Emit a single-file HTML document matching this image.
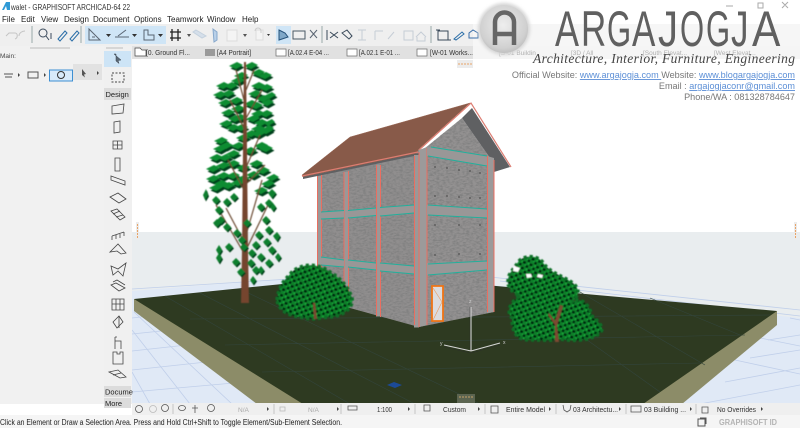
<!DOCTYPE html>
<html><head><meta charset="utf-8"><title>ARCHICAD</title>
<style>
html,body{margin:0;padding:0;background:#fff}
svg{display:block}
text{font-family:"Liberation Sans",sans-serif}
</style></head><body>
<svg width="800" height="428" viewBox="0 0 800 428" xmlns="http://www.w3.org/2000/svg">
<defs>
<pattern id="leaf" width="7" height="6" patternUnits="userSpaceOnUse" patternTransform="rotate(20)">
<rect width="7" height="6" fill="#0c8029"/>
<path d="M0 0h3v2.500H0zM4 3h2.500v2.500H4z" fill="#04240f"/>
<path d="M2.500 2.500h1.500v1.500H2.500zM5 0h2v2H5z" fill="#14a538"/>
</pattern>
<path id="up" d="M229 66l8-4 6 3-7 4zM244 66l8-4 6 3-7 4zM251 73l8-4 6 3-7 4zM234 76l8-4 6 3-7 4zM258 76l8-4 6 3-7 4zM216 86l8-4 6 3-7 4zM224 86l8-4 6 3-7 4zM231 81l8-4 6 3-7 4zM251 86l8-4 6 3-7 4zM259 88l8-4 6 3-7 4zM264 96l8-4 4 3-7 4zM213 95l8-4 6 3-7 4zM221 94l8-4 6 3-7 4zM248 94l8-4 6 3-7 4zM256 99l8-4 6 3-7 4zM261 103l8-4 5 3-7 4zM218 103l8-4 6 3-7 4zM229 101l8-4 6 3-7 4zM244 104l8-4 6 3-7 4zM249 106l8-4 6 3-7 4zM221 113l8-4 6 3-7 4zM231 109l8-4 6 3-7 4zM233 118l8-4 6 3-7 4zM251 114l8-4 6 3-7 4zM259 114l8-4 6 3-7 4zM264 123l8-4 3 3-7 4zM228 119l8-4 6 3-7 4zM246 119l8-4 6 3-7 4zM254 123l8-4 6 3-7 4zM219 124l8-4 6 3-7 4zM226 128l8-4 6 3-7 4zM251 129l8-4 6 3-7 4zM259 131l8-4 6 3-7 4zM234 128l8-4 6 3-7 4zM263 129l6-4 5 3-6 4zM251 134l8-4 6 3-7 4zM244 134l8-4 6 3-7 4zM236 138l8-4 6 3-7 4zM231 146l8-4 6 3-7 4zM219 146l8-4 6 3-7 4zM213 149l8-4 6 3-7 4zM214 141l8-4 6 3-7 4zM254 146l8-4 6 3-7 4zM259 149l8-4 6 3-7 4zM243 151l8-4 6 3-7 4zM226 154l8-4 6 3-7 4zM218 158l8-4 6 3-7 4zM209 158l8-4 6 3-7 4zM249 164l8-4 6 3-7 4zM256 171l8-4 6 3-7 4zM206 169l8-4 6 3-7 4zM216 166l8-4 6 3-7 4zM226 164l8-4 6 3-7 4zM236 168l8-4 6 3-7 4zM266 178l8-4 5 3-7 4zM206 179l8-4 6 3-7 4zM216 176l8-4 6 3-7 4zM226 176l8-4 6 3-7 4zM236 179l8-4 6 3-7 4zM261 184l8-4 6 3-7 4zM209 188l8-4 6 3-7 4zM221 186l8-4 6 3-7 4zM231 183l8-4 6 3-7 4zM254 191l8-4 6 3-7 4zM246 175l8-4 6 3-7 4zM214 184l8-4 6 3-7 4z"/>
<path id="lo" d="M268 193l4-4 4 4-4 5zM203 195l3-6 2 6-3 5zM212 200l4-4 4 4-4 4zM223 202l4-4 4 4-4 4zM215 210l4-4 4 4-4 4zM265 203l4-4 4 4-4 4zM270 207l3-4 3 4-3 4zM257 207l4-4 4 4-4 4zM262 220l4-4 4 4-4 4zM217 220l4-4 4 4-4 4zM223 227l4-4 4 4-4 4zM213 223l4-4 4 4-4 4zM233 233l4-4 4 4-4 4zM243 223l4-4 4 4-4 4zM265 230l4-4 4 4-4 4zM273 236l4-4 3 4-3 5zM255 235l4-4 4 4-4 4zM225 247l4-4 4 4-4 4zM216 250l3-5 3 5-3 5zM216 258l3-5 3 5-3 5zM263 242l4-4 4 4-4 4zM268 250l4-4 4 4-4 4zM275 257l3-4 3 4-3 4zM240 247l4-4 4 4-4 4zM248 253l4-4 4 4-4 4zM232 262l4-4 4 4-4 4zM257 257l4-4 4 4-4 4zM265 263l4-4 4 4-4 4zM237 272l4-4 4 4-4 4zM252 270l4-4 4 4-4 4zM247 263l4-4 4 4-4 4zM250 280l3-4 3 4-3 4zM230 197l4-4 4 4-4 4zM238 240l4-4 4 4-4 4zM252 245l4-4 4 4-4 4zM258 270l3-4 3 4-3 4z"/>
<filter id="b" x="-5%" y="-5%" width="110%" height="110%"><feGaussianBlur stdDeviation=".35"/></filter>
<filter id="b3" x="-5%" y="-5%" width="110%" height="110%"><feGaussianBlur stdDeviation=".45"/></filter>
<filter id="b2" x="-20%" y="-20%" width="140%" height="140%"><feGaussianBlur stdDeviation="1.6"/></filter>
<filter id="stone" x="0" y="0" width="100%" height="100%">
<feTurbulence type="fractalNoise" baseFrequency=".3 .6" numOctaves="2" seed="4" result="n"/>
<feColorMatrix in="n" type="matrix" values="0 0 0 0 .22  0 0 0 0 .22  0 0 0 0 .22  3 0 0 0 -1.200" result="d"/>
<feComposite in="d" in2="SourceAlpha" operator="in" result="c"/>
<feMerge><feMergeNode in="SourceGraphic"/><feMergeNode in="c"/></feMerge>
</filter>
<radialGradient id="disc" cx=".48" cy=".42" r=".6"><stop offset="0" stop-color="#eeeeee"/><stop offset=".8" stop-color="#d0d0d0"/><stop offset="1" stop-color="#bdbdbd"/></radialGradient>
</defs>

<rect width="800" height="428" fill="#fff"/>
<rect x="132" y="232" width="668" height="172" fill="#e9edef"/>
<path d="M132 291L372 272 800 318V404H132Z" fill="#e0e9f6"/>
<g stroke="#c0cfea" stroke-width=".8" fill="none">
<path d="M132 334L190 328M132 351L205 343M132 370L225 360M132 392L245 382M132 318L175 313M150 404L132 372M190 404L132 330M232 404L134 312"/>
<path d="M700 404L800 385M725 382L800 368M750 358L800 350M768 340L800 335M690 404L800 425M735 360L800 374M760 338L800 346M790 318L800 320"/>
<path d="M132 289L290 279M490 277L800 310M500 281L800 316"/>
</g>
<path d="M134 299V311L257 404H682L777 325V311Z" fill="#8c8c68"/>
<path d="M134 299L372 275 777 311 643 404H303Z" fill="#2e3a21"/>
<g stroke="#33453c" stroke-width=".6" fill="none">
<path d="M165 296L350 404M200 293L415 404M240 289L480 404M510 285L660 392M580 292L705 365M650 298L740 335M190 319L770 315M225 345L745 335M262 372L700 363"/>
</g>
<path d="M387 385l7-3 8 3-7 3z" fill="#1c4a96"/>

<!-- tree -->
<g filter="url(#b3)">
<use href="#up" transform="translate(1.500 2.500)" fill="#04401a"/>
<use href="#up" fill="#0b8c31"/>
<path d="M241 303L242 250 243 150 244 62 246 62 247 150 248 250 249 303Z" fill="#74452f"/>
<g stroke="#6b4a32" stroke-width="1.200" fill="none">
<path d="M243 240L226 208M245 255L216 205M246 235L262 180M246 250L268 205M244 190L228 160M245 170L260 135M245 130L230 100M245 120L262 90M244 100L236 70M246 90L254 70M245 185L265 165"/>
</g>
<use href="#lo" transform="translate(1 1.500)" fill="#04401a"/>
<use href="#lo" fill="#0a7f2d"/>
</g>

<!-- house -->
<g filter="url(#b)">
<path d="M317 175L419 150 419 327 350 308 317 298Z" fill="#908e8e" filter="url(#stone)"/>
<path d="M419 153L462 118 490 158 494 172V312L419 327Z" fill="#939191" filter="url(#stone)"/>
<path d="M462 118L472 108 510 167 494 172 490 158Z" fill="#5f6062"/>
<path d="M302 175L350 137 470 103 419 149 416 154 303 177Z" fill="#885a48" stroke="#9b6a58" stroke-width=".5"/>
<path d="M303 177L419 153V155L303 179Z" fill="#5f6062"/>
<path d="M302 176L418 152M419 150L471 103 511 167" stroke="#dc7d72" stroke-width="1.200" fill="none"/>
<path d="M317 176h4.500v122h-4.500zM344 172h4.500v136h-4.500zM376 165h4.500v151.500h-4.500zM414 155h5v172.500h-5z" fill="#9a9898"/>
<path d="M419 150l8-3v178l-8 2zM487 156l7 2v154l-7 1z" fill="#9c9a9a"/>
<g stroke="#ea6e61" stroke-width="1" fill="none">
<path d="M317.500 176V296M321.500 175V298M344 172V305M348.500 171V308M376.500 165V316M380.500 165V317M414.500 156V325M419 152V327M427 148V325M487.500 156V312M494 160V312"/>
</g>
<path d="M321 212L344 210.500V218L321 219ZM348 210.500L376 208V215.500L348 218ZM380 207.500L414 205V213L380 216ZM321 257L344 260V267L321 265ZM348 260L376 263V270L348 267ZM380 263L414 266V274L380 271ZM427 147L487 156V166L427 156ZM427 205L487 209V218L427 215ZM427 263L487 261V270L427 275Z" fill="#999797"/>
<g stroke="#21b09c" stroke-width="1" fill="none">
<path d="M321 212L344 210.500M321 219L344 218M348 210.500L376 208M348 218L376 215.500M380 207.500L414 205M380 216L414 213M321 257L344 260M321 265L344 267M348 260L376 263M348 267L376 270M380 263L414 266M380 271L414 274M431 147L487 156M428 156L487 166M428 205L487 209M428 215L487 218M428 264L487 261M428 275L487 270"/>
</g>
<g fill="#505050"><circle cx="435" cy="167" r=".9"/><circle cx="447" cy="168" r=".9"/><circle cx="459" cy="170" r=".9"/><circle cx="470" cy="171" r=".9"/><circle cx="480" cy="173" r=".9"/><circle cx="435" cy="196" r=".9"/><circle cx="447" cy="196" r=".9"/><circle cx="459" cy="197" r=".9"/><circle cx="470" cy="198" r=".9"/><circle cx="480" cy="198" r=".9"/><circle cx="435" cy="225" r=".9"/><circle cx="459" cy="225" r=".9"/><circle cx="480" cy="225" r=".9"/><circle cx="435" cy="255" r=".9"/><circle cx="459" cy="254" r=".9"/><circle cx="480" cy="254" r=".9"/></g>
<path d="M432 286h11v35h-11z" fill="#dcdcde" stroke="#f07412" stroke-width="1.800"/>
<path d="M433 288l9 14-9 18" stroke="#e89a60" stroke-width=".6" fill="none"/>
</g>

<!-- bushes -->
<g filter="url(#b3)">
<path d="M277 300C279 284 285 280 292 272 302 263 318 263 330 272 340 278 348 286 352 298 354 306 345 316 330 317 318 318 314 320 305 318 290 316 279 312 277 300Z" fill="url(#leaf)" stroke="#0b6f27" stroke-width="3.500" stroke-dasharray="3 3"/>
<path d="M315 303l2 16h-3l-1-16z" fill="#7b4a32"/>
<path d="M508 282C508 272 514 270 518 262 524 255 538 254 544 264 552 274 564 276 574 284 582 292 576 298 572 302 578 298 588 300 592 316 602 324 604 330 600 332 596 340 574 342 560 339 552 341 540 340 530 340 516 340 512 332 512 318 506 312 510 302 520 296 512 292 508 288 508 282Z" fill="url(#leaf)" stroke="#0b6f27" stroke-width="3.500" stroke-dasharray="3 3"/>
<path d="M514 266l6 2-2 4-5-1zM526 274h5l1 3-5 1zM538 274l5 1-1 3-5-1z" fill="#fff"/>
<path d="M555 342h4l-2-16 6-20-3-1-5 16-6-8-1 2 7 10z" fill="#7b4a32"/>
</g>
<!-- axes -->
<g stroke="#d6d6d6" stroke-width="1.100" fill="none"><path d="M471 307V351M471 351L500 343M471 351L444 345"/></g>
<g stroke="#2b2b2b" stroke-width=".4" fill="none"><path d="M470 307V350M471 353L500 345M471 353L444 347"/></g>
<text x="503" y="344" font-size="5" fill="#ccc">x</text>
<text x="440" y="345" font-size="5" fill="#ccc">y</text>
<text x="469" y="303" font-size="5" fill="#ccc">z</text>

<!-- panels -->
<rect x="0" y="46" width="132" height="358" fill="#f1f1f1"/>
<rect x="0" y="0" width="800" height="25" fill="#fff"/>
<rect x="0" y="24" width="473" height="22" fill="#efefef"/>
<rect x="473" y="24" width="327" height="22" fill="#f6f6f6"/>
<rect x="132" y="46" width="341" height="13" fill="#e1e1e1"/>
<rect x="473" y="46" width="327" height="13" fill="#f5f5f5"/>
<path d="M2 10L6 2h4v8H7L6 6 4 10Z" fill="#2f9ad6"/>
<text x="11" y="10" font-size="8" fill="#333" textLength="119" lengthAdjust="spacingAndGlyphs">walet - GRAPHISOFT ARCHICAD-64 22</text>
<g font-size="8" fill="#222">
<text x="2" y="22">File</text><text x="21" y="22">Edit</text><text x="41" y="22">View</text><text x="64" y="22">Design</text><text x="93" y="22">Document</text><text x="134" y="22">Options</text><text x="167" y="22">Teamwork</text><text x="207" y="22">Window</text><text x="242" y="22">Help</text>
</g>
<rect x="85" y="26" width="81" height="18" fill="#cfe5f6"/>
<rect x="276" y="26" width="15" height="18" fill="#cfe5f6"/>
<g stroke="#dcdcdc" fill="#f4f4f4"><rect x="227" y="30" width="10" height="11"/><rect x="256" y="30" width="7" height="10"/></g>
<g stroke="#9aa" stroke-width="1" fill="none"><path d="M32 26V43M81 26V43M322 26V43M431 26V43"/></g>
<g fill="none" stroke="#3b4a5c" stroke-width="1">
<path d="M6 36l3-3h6c3 0 3 5 0 6M25 31c-3 0-6 2-6 5" stroke="#c4c4c4"/>
<circle cx="43" cy="33" r="4"/><path d="M46 36l3 4M51 39v-6"/>
<path d="M58 39l7-8 2 2-7 8zM70 39l7-8 2 2-7 8z" stroke="#2b6ea8"/>
<path d="M89 40V29l11 11ZM92 37h3" stroke="#5a6572"/>
<path d="M115 37h14M118 36l8-6" stroke="#5a6572"/>
<path d="M144 30v10h10v-5h-6v-5Z" stroke="#5a6572"/>
<path d="M172 29V41M178 29V41M170 32H181M170 38H181" stroke="#222" stroke-width="1.300"/>
<path d="M196 30l10 6-4 2-9-6Z" stroke="#c4d1de" fill="#d5dfea"/>
<path d="M213 29l4 3v8l-3 2Z" stroke="#87a8cc" fill="#b9d0e8"/>
<path d="M255 31a3 3 0 0 1 6 0v2" stroke="#ccc"/>
<path d="M279 30l6 3 3 4-9 3Z" stroke="#26527a" fill="#7fa8c8"/>
<rect x="293" y="31" width="12" height="8" stroke="#4a5966"/>
<path d="M310 30l7 8M317 30l-7 8" stroke="#5a6572"/>
<path d="M327 30v10M330 38l8-6M330 32l8 6" stroke="#3a4a5a"/>
<path d="M342 33l5-3 5 6-3 3Z" stroke="#3a4a5a"/>
<path d="M358 30h8M362 30v10M358 40h8M375 31h8M375 31v9M388 39l6-7M404 31h9v9h-9ZM416 37l5-5 5 5M417 37v4h8v-4" stroke="#c6cdd6"/>
<path d="M438 31h10v9h-10ZM436 30h4M447 40h4" stroke="#3a4a5a"/>
<path d="M454 39l8-7 2 2-8 6Z" stroke="#2b6ea8"/>
<path d="M469 38v-5l4-3 5 3v5Z" stroke="#3a6ea8"/>
<circle cx="486" cy="36" r="4" stroke="#9cb2cc"/>
</g>
<g fill="#333"><path d="M106 34h5l-2.500 3ZM132 34h5l-2.500 3ZM158 34h5l-2.500 3Z"/><path d="M187 34h4l-2 3ZM243 34h4l-2 3Z" fill="#555"/><path d="M267 34h3l-1.500 2Z"/></g>
<!-- tabs -->
<g font-size="7.500" fill="#333">
<path d="M135 48h5l2 2h4v6h-11Z" fill="#fff" stroke="#444" stroke-width=".7"/>
<text x="146" y="55" textLength="44" lengthAdjust="spacingAndGlyphs">[0. Ground Fl...</text>
<rect x="205" y="49" width="10" height="7" fill="#9a9a9a"/>
<text x="217" y="55" textLength="34" lengthAdjust="spacingAndGlyphs">[A4 Portrait]</text>
<g stroke="#666" stroke-width=".7" fill="#fff"><rect x="276" y="49" width="10" height="7"/><rect x="347" y="49" width="10" height="7"/><rect x="417" y="49" width="10" height="7"/></g>
<text x="288" y="55" textLength="41" lengthAdjust="spacingAndGlyphs">[A.02.4 E-04 ...</text>
<text x="359" y="55" textLength="41" lengthAdjust="spacingAndGlyphs">[A.02.1 E-01 ...</text>
<text x="430" y="55" textLength="43" lengthAdjust="spacingAndGlyphs">[W-01 Works...</text>
<g fill="#b0b0b0" font-size="6.500"><text x="499" y="55">[S-01 Buildin</text><text x="571" y="55">[3D / All</text><text x="643" y="55">[South Elevat...</text><text x="714" y="55">[West Elevat...</text></g>
</g>
<rect x="457" y="60" width="16" height="8" fill="#ececec"/>
<path d="M458 64h14" stroke="#e8a468" stroke-dasharray="2 1"/>
<!-- left panel -->
<path d="M30 48H70" stroke="#bbb"/>
<text x="0" y="58" font-size="6.500" fill="#444">Main:</text>
<rect x="73" y="64" width="29" height="16" fill="#e2e2e2"/>
<rect x="49.500" y="70" width="23" height="11" fill="#d8eafa" stroke="#3d8fd2"/>
<circle cx="61" cy="75" r="3.500" fill="none" stroke="#333"/><path d="M82 69l4 5-2 .5 1 3-3-2.500Z" fill="#555"/>
<path d="M4 74h9M5 77h7M28 72h10v6H28Z" stroke="#555" fill="none"/>
<path d="M18 73l2 2-2 2ZM44 73l2 2-2 2ZM97 71l2 2-2 2Z" fill="#444"/>
<!-- toolbox -->
<rect x="104" y="46" width="28" height="358" fill="#f0f0f0"/>
<path d="M106 48H123" stroke="#bbb"/>
<rect x="104" y="51" width="27" height="16" fill="#cde4f6"/>
<path d="M114 54l7 6-3 .5 1 3-3-2.500V54Z" fill="#5a6774" stroke="#39424c" stroke-width=".5"/>
<rect x="112" y="73" width="12" height="9" fill="none" stroke="#444" stroke-dasharray="2 1.500"/>
<rect x="104" y="88" width="27" height="12" fill="#dcdcdc"/>
<text x="105.500" y="97" font-size="7.500" fill="#222">Design</text>
<g fill="none" stroke="#454545" stroke-width=".8">
<path d="M112 106l12-2-1 9-11 1Z"/>
<path d="M114 122l6-1v11l-6 1Z"/>
<path d="M113 141h9v8h-9ZM117.500 141v8M113 145h9"/>
<path d="M115 158h5v13h-5Z"/>
<path d="M111 176l14 5v4l-14-5Z"/>
<path d="M110 197l8-4 8 6-7 4Z"/>
<path d="M111 211l6-2 8 8-5 3ZM113 214l7-3M116 217l7-2"/>
<path d="M112 236l12-4M112 236v4M116 235v4M120 234v4M124 232v4"/>
<path d="M110 252l8-8 8 9-5 1-4-3Z"/>
<path d="M111 266l7 3 8-6-3 13-5-5-5 4Z"/>
<path d="M111 285l5-2 9 5-6 3ZM113 282l4-2 8 5"/>
<path d="M112 299h12v11h-12ZM116 299v11M120 299v11M112 304h12"/>
<path d="M113 322l6-6 4 6-6 6ZM119 316v12"/>
<path d="M115 337v8M115 341h6v8M115 345v4M115 337h2"/>
<path d="M113 352h4v2h3v-2h3v12h-10Z"/>
<path d="M109 372l9-2 8 7-6 1ZM113 375l8-2"/>
</g>
<rect x="104" y="386" width="27" height="11" fill="#dcdcdc"/>
<rect x="104" y="398" width="27" height="10" fill="#dcdcdc"/>
<text x="105" y="394.500" font-size="7.500" fill="#222">Docume</text>
<text x="105" y="406" font-size="7.500" fill="#222">More</text>
<!-- bottom bar -->
<rect x="132" y="403" width="668" height="12" fill="#efefef"/>
<rect x="0" y="415" width="800" height="13" fill="#f5f5f5"/>
<rect x="457" y="394" width="18" height="9" fill="#5b6450"/>
<path d="M459 397h14" stroke="#c6a068" stroke-dasharray="2 1"/>
<g stroke="#c4c4c4" fill="none"><path d="M173 404v10M274 404v10M341 404v10M415 404v10M485 404v10M556 404v10M626 404v10M696 404v10"/></g>
<g fill="none" stroke="#555" stroke-width=".8">
<circle cx="139" cy="409" r="3.500"/><circle cx="153" cy="409" r="3.500" stroke="#bbb"/><circle cx="165" cy="408" r="3.500"/>
<ellipse cx="182" cy="408" rx="3.500" ry="2.500"/><path d="M195 405v8M192 408h6"/><circle cx="211" cy="408" r="3.500"/>
<path d="M348 406h9v4h-9ZM424 405h6v6h-6ZM491 406h7v7h-7ZM563 405l1 5 3 2 3-2 1-5M631 406h10v6h-10ZM702 407h6v6h-6Z"/>
<path d="M280 407h5v4h-5Z" stroke="#bbb"/>
</g>
<g font-size="7.500" fill="#333">
<text x="238" y="412" fill="#aaa" font-size="6.500">N/A</text>
<text x="308" y="412" fill="#aaa" font-size="6.500">N/A</text>
<text x="377" y="412" textLength="15" lengthAdjust="spacingAndGlyphs">1:100</text>
<text x="443" y="412" textLength="23" lengthAdjust="spacingAndGlyphs">Custom</text>
<text x="506" y="412" textLength="39" lengthAdjust="spacingAndGlyphs">Entire Model</text>
<text x="573" y="412" textLength="45" lengthAdjust="spacingAndGlyphs">03 Architectu...</text>
<text x="644" y="412" textLength="42" lengthAdjust="spacingAndGlyphs">03 Building ...</text>
<text x="717" y="412" textLength="39" lengthAdjust="spacingAndGlyphs">No Overrides</text>
</g>
<g fill="#444"><path d="M267 407l2 2-2 2ZM337 407l2 2-2 2ZM408 407l2 2-2 2ZM478 407l2 2-2 2ZM549 407l2 2-2 2ZM619 407l2 2-2 2ZM690 407l2 2-2 2ZM761 407l2 2-2 2Z"/></g>
<text x="0" y="425" font-size="8" fill="#222" textLength="342" lengthAdjust="spacingAndGlyphs">Click an Element or Draw a Selection Area. Press and Hold Ctrl+Shift to Toggle Element/Sub-Element Selection.</text>
<path d="M698 419h7v7h-7ZM700 418h6v6" fill="none" stroke="#555"/>
<text x="719" y="425" font-size="8" fill="#b4b4b4" font-weight="bold" textLength="58" lengthAdjust="spacingAndGlyphs">GRAPHISOFT ID</text>
<path d="M726 6h7M758 3h5v5h-5ZM782 2l6 6M788 2l-6 6" stroke="#aaa" fill="none"/>
<!-- logo -->
<circle cx="504" cy="29" r="26" fill="#d6d6d6" filter="url(#b2)"/>
<circle cx="504" cy="29" r="24" fill="url(#disc)" filter="url(#b)"/>
<path d="M495 45V22a9.500 9.500 0 0 1 19 0V45M495 34H514" fill="none" stroke="#666" stroke-width="4.500"/>
<g font-size="50" fill="#606060" filter="url(#b)">
<text transform="translate(555 46) scale(.72 1)">A</text>
<text transform="translate(581 46) scale(.7 1)">R</text>
<text transform="translate(607 46) scale(.62 1)">G</text>
<text transform="translate(632 46) scale(.7 1)">A</text>
<text transform="translate(658 46) scale(.8 1)">J</text>
<text transform="translate(680 46) scale(.62 1)">O</text>
<text transform="translate(706 46) scale(.62 1)">G</text>
<text transform="translate(731 46) scale(.7 1)">J</text>
<text transform="translate(752 46) scale(.85 1)">A</text>
</g>
<text x="533" y="63" font-size="13.500" font-style="italic" fill="#444" textLength="262" lengthAdjust="spacing" style="font-family:'Liberation Serif',serif">Architecture, Interior, Furniture, Engineering</text>
<g font-size="9.100" fill="#777" text-anchor="end">
<text x="795" y="78">Official Website: <tspan fill="#5c8fd6" text-decoration="underline">www.argajogja.com </tspan>Website: <tspan fill="#5c8fd6" text-decoration="underline">www.blogargajogja.com</tspan></text>
<text x="795" y="89">Email : <tspan fill="#5c8fd6" text-decoration="underline">argajogjaconr@gmail.com</tspan></text>
<text x="795" y="100">Phone/WA : 081328784647</text>
</g>
<path d="M136 222h3v18h-3ZM794 222h3v18h-3Z" fill="#ececec"/>
<path d="M137.500 224v14M795.500 224v14" stroke="#e8a468" stroke-dasharray="2 1"/>
</svg>
</body></html>
